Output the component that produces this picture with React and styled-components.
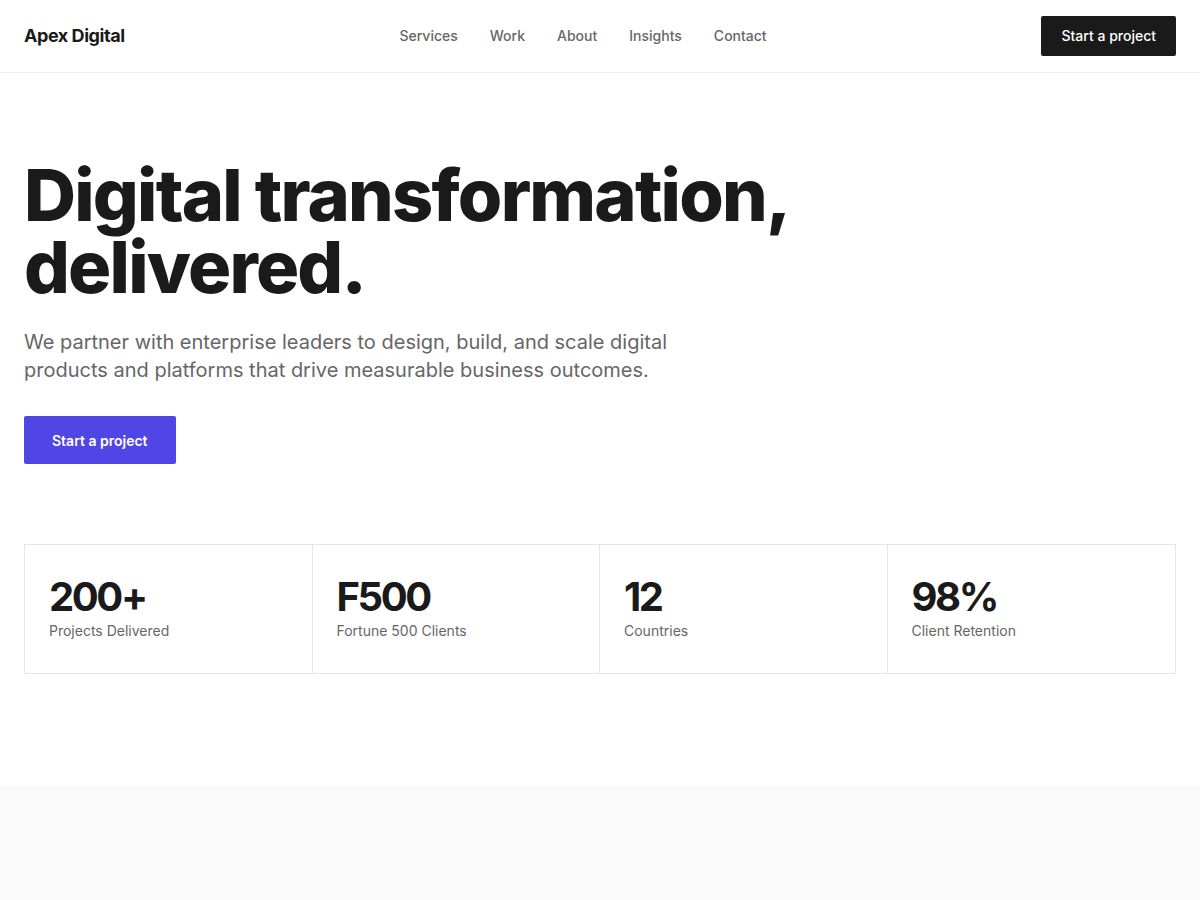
import React from "react";
import styled, { createGlobalStyle } from "styled-components";

const GlobalStyle = createGlobalStyle`
  * { box-sizing: border-box; }
  body {
    margin: 0;
    font-family: Inter, "Noto Sans", sans-serif;
    color: #1a1a1a;
    background: #ffffff;
    -webkit-font-smoothing: antialiased;
  }
`;

const Header = styled.header`
  height: 73px;
  padding: 0 24px 1px;
  display: flex;
  align-items: center;
  justify-content: space-between;
  border-bottom: 1px solid #f0f0f0;
`;

const Logo = styled.a`
  font-size: 18px;
  font-weight: 700;
  letter-spacing: -0.025em;
  color: #1a1a1a;
  text-decoration: none;
`;

const Nav = styled.nav`
  display: flex;
  gap: 32px;
`;

const NavLink = styled.a`
  font-size: 14px;
  font-weight: 500;
  color: #666666;
  text-decoration: none;
`;

const Button = styled.a`
  display: inline-flex;
  align-items: center;
  justify-content: center;
  height: ${(p) => (p.$large ? "48px" : "40px")};
  padding: 0 ${(p) => (p.$large ? "28px" : "20px")};
  border-radius: 2px;
  background: ${(p) => (p.$accent ? "#4f46e5" : "#1a1a1a")};
  color: #ffffff;
  font-size: 14px;
  font-weight: ${(p) => (p.$large ? 600 : 500)};
  text-decoration: none;
`;

const Hero = styled.section`
  padding: 86px 24px 112px;
`;

const Title = styled.h1`
  margin: 0;
  font-size: 72px;
  line-height: 72px;
  font-weight: 800;
  letter-spacing: -0.025em;
`;

const Lead = styled.p`
  margin: 25px 0 32px;
  max-width: 680px;
  font-size: 20px;
  line-height: 28px;
  color: #666666;
`;

const Stats = styled.div`
  margin-top: 80px;
  display: grid;
  grid-template-columns: repeat(4, 1fr);
  border: 1px solid #e5e5e5;
`;

const Stat = styled.div`
  padding: 32px 24px;
  &:not(:last-child) {
    border-right: 1px solid #e5e5e5;
  }
`;

const StatValue = styled.div`
  font-size: 40px;
  line-height: 40px;
  font-weight: 700;
  letter-spacing: -0.06em;
`;

const StatLabel = styled.div`
  margin-top: 4px;
  font-size: 14px;
  line-height: 20px;
  color: #666666;
`;

const Band = styled.section`
  height: 200px;
  background: #fafafa;
`;

const links = ["Services", "Work", "About", "Insights", "Contact"];

const stats = [
  { value: "200+", label: "Projects Delivered" },
  { value: "F500", label: "Fortune 500 Clients" },
  { value: "12", label: "Countries" },
  { value: "98%", label: "Client Retention" },
];

export default function App() {
  return (
    <>
      <GlobalStyle />
      <Header>
        <Logo href="#">Apex Digital</Logo>
        <Nav>
          {links.map((l) => (
            <NavLink key={l} href="#">
              {l}
            </NavLink>
          ))}
        </Nav>
        <Button href="#">Start a project</Button>
      </Header>
      <Hero>
        <Title>
          Digital transformation,
          <br />
          delivered.
        </Title>
        <Lead>
          We partner with enterprise leaders to design, build, and scale digital
          products and platforms that drive measurable business outcomes.
        </Lead>
        <Button href="#" $large $accent>
          Start a project
        </Button>
        <Stats>
          {stats.map((s) => (
            <Stat key={s.label}>
              <StatValue>{s.value}</StatValue>
              <StatLabel>{s.label}</StatLabel>
            </Stat>
          ))}
        </Stats>
      </Hero>
      <Band />
    </>
  );
}
